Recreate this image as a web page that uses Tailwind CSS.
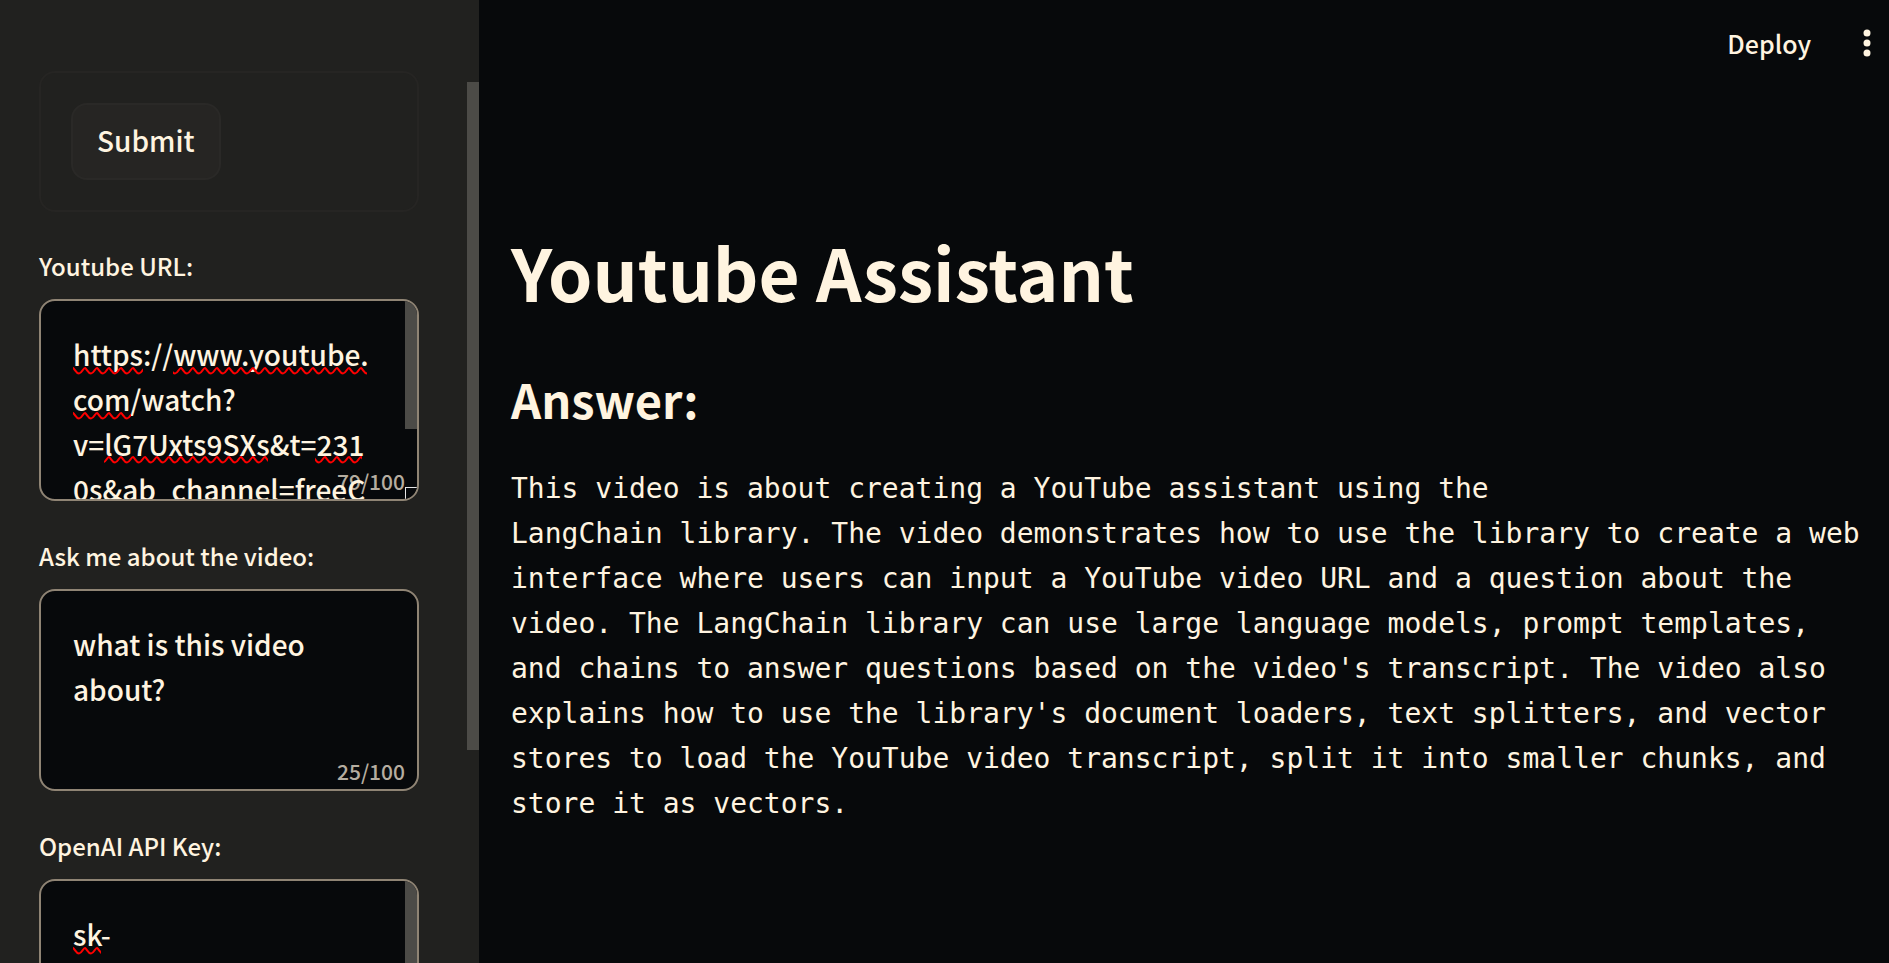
<!DOCTYPE html>
<html lang="en">
<head>
<meta charset="utf-8">
<meta name="viewport" content="width=device-width, initial-scale=1">
<title>Youtube Assistant</title>
<script src="https://cdn.jsdelivr.net/npm/@tailwindcss/browser@4"></script>
</head>
<body class="flex h-screen overflow-hidden bg-[#07090b] font-['Noto_Sans_CJK_SC','Noto_Sans',sans-serif] text-[#fff4e0]">
  <svg class="absolute size-0" aria-hidden="true">
    <defs>
      <pattern id="wave" width="12" height="8" patternUnits="userSpaceOnUse">
        <path d="M-2 0 L0 1 C2 2 3 6.500 6 6.500 C9 6.500 10 1 12 1 L14 1" fill="none" stroke="#f00" stroke-width="2"/>
      </pattern>
    </defs>
  </svg>

  <aside class="relative h-full w-[479px] shrink-0 overflow-hidden bg-[#21211f] pt-[71px] pr-[60px] pl-[39px]">
    <form id="ask" class="rounded-2xl border-2 border-[#262523] p-[30px]">
      <button type="submit" class="flex h-[77px] items-center rounded-2xl border-2 border-[#2a2927] bg-[#262523] px-6 pb-0.5 text-[28px] leading-[45px] font-medium">Submit</button>
    </form>

    <div class="mt-8">
      <label for="url" class="flex h-[55px] items-start pt-1 text-[24px] leading-[36px] font-medium">Youtube URL:</label>
      <div class="relative h-[202px] overflow-hidden rounded-2xl border-2 border-[#8f8474] bg-[#07090b]">
        <span class="absolute right-3 bottom-0 text-[21px] leading-[36px] font-medium text-[#b5ada0]">79/100</span>
        <textarea id="url" form="ask" spellcheck="false" maxlength="100" class="relative block size-full resize-none overflow-hidden bg-transparent pt-[31px] pr-[44px] pl-[32px] text-[28px] leading-[45px] font-medium break-all outline-none">https://www.youtube.
com/watch?
v=lG7Uxts9SXs&amp;t=231
0s&amp;ab_channel=freeC</textarea>
        <svg class="pointer-events-none absolute top-[66px] left-[32px] h-[98px] w-[296px]" aria-hidden="true">
          <rect width="70" height="8" fill="url(#wave)"/>
          <rect x="100" width="194" height="8" fill="url(#wave)"/>
          <g transform="translate(0 45)"><rect width="58" height="8" fill="url(#wave)"/></g>
          <g transform="translate(0 89)"><rect x="31" width="164" height="8" fill="url(#wave)"/><rect x="242" width="47" height="8" fill="url(#wave)"/></g>
        </svg>
        <div class="absolute top-0 right-0 h-32 w-3 bg-[#4c4b47]"></div>
        <div class="absolute right-0 bottom-0 size-3 border-t border-l border-[#e6e6e6] bg-[#07090b]"></div>
      </div>
    </div>

    <div class="mt-[33px]">
      <label for="question" class="flex h-[55px] items-start pt-1 text-[24px] leading-[36px] font-medium">Ask me about the video:</label>
      <div class="relative h-[202px] overflow-hidden rounded-2xl border-2 border-[#8f8474] bg-[#07090b]">
        <span class="absolute right-3 bottom-0 text-[21px] leading-[36px] font-medium text-[#b5ada0]">25/100</span>
        <textarea id="question" form="ask" spellcheck="false" maxlength="100" class="relative block size-full resize-none overflow-hidden bg-transparent pt-[31px] pr-[44px] pl-[32px] text-[28px] leading-[45px] font-medium outline-none">what is this video
about?</textarea>
      </div>
    </div>

    <div class="mt-[33px]">
      <label for="key" class="flex h-[55px] items-start pt-1 text-[24px] leading-[36px] font-medium">OpenAI API Key:</label>
      <div class="relative h-[202px] overflow-hidden rounded-2xl border-2 border-[#8f8474] bg-[#07090b]">
        <textarea id="key" form="ask" spellcheck="false" maxlength="100" class="relative block size-full resize-none overflow-hidden bg-transparent pt-[31px] pr-[44px] pl-[32px] text-[28px] leading-[45px] font-medium outline-none">sk-</textarea>
        <svg class="pointer-events-none absolute top-[66px] left-[32px] h-2 w-7" aria-hidden="true"><rect width="28" height="8" fill="url(#wave)"/></svg>
        <div class="absolute top-0 right-0 h-32 w-3 bg-[#4c4b47]"></div>
      </div>
    </div>

    <div class="absolute top-[82px] right-0 h-[668px] w-3 bg-[#4c4b47]"></div>
  </aside>

  <div class="flex min-w-0 flex-1 flex-col">
    <header class="flex h-[86px] items-center justify-end gap-[48px] pr-[14px]">
      <button type="button" class="text-[25px] leading-[36px] font-medium">Deploy</button>
      <button type="button" aria-label="Menu" class="block">
        <svg class="h-7 w-4" viewBox="0 0 16 28" fill="currentColor"><circle cx="8" cy="4" r="3.500"/><circle cx="8" cy="14" r="3.500"/><circle cx="8" cy="24" r="3.500"/></svg>
      </button>
    </header>
    <main class="px-8 pt-[139px]">
      <h1 class="text-[71px] leading-[92px] font-bold">Youtube Assistant</h1>
      <h2 class="mt-[48px] text-[47px] leading-[68px] font-bold">Answer:</h2>
      <pre class="mt-[33px] font-['DejaVu_Sans_Mono',monospace] text-[28px] leading-[45px]">This video is about creating a YouTube assistant using the
LangChain library. The video demonstrates how to use the library to create a web
interface where users can input a YouTube video URL and a question about the
video. The LangChain library can use large language models, prompt templates,
and chains to answer questions based on the video's transcript. The video also
explains how to use the library's document loaders, text splitters, and vector
stores to load the YouTube video transcript, split it into smaller chunks, and
store it as vectors.</pre>
    </main>
  </div>
</body>
</html>
